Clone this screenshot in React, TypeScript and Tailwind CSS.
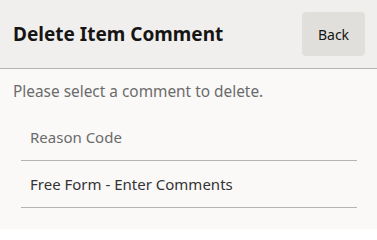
import React from "react";

export default function App() {
  const font = { fontFamily: '"Noto Sans", "Open Sans", sans-serif' };
  return (
    <div className="w-[377px] h-[229px] bg-[#faf9f8] overflow-hidden" style={font}>
      <div className="h-[69px] bg-[#f0efee] border-b border-[#b4b4b4] flex items-center justify-between pl-[13px] pr-[12px]">
        <h1 className="text-[19px] font-bold text-[#161513] leading-none">Delete Item Comment</h1>
        <button className="w-[63px] h-[44px] rounded-[4px] bg-[#e0dfdc] text-[14px] text-[#161513]">Back</button>
      </div>
      <div className="pt-[12px] pl-[13px] text-[15.4px] text-[#6b6b6b] leading-[22px]">
        Please select a comment to delete.
      </div>
      <div className="ml-[21px] mr-[20px] mt-[11px]">
        <div className="h-[47px] border-b border-[#b4b4b4] flex items-center pl-[9px] text-[15px] text-[#6b6b6b]">
          Reason Code
        </div>
        <div className="h-[47px] border-b border-[#b4b4b4] flex items-center pl-[9px] text-[15px] text-[#333333]">
          Free Form - Enter Comments
        </div>
      </div>
    </div>
  );
}
